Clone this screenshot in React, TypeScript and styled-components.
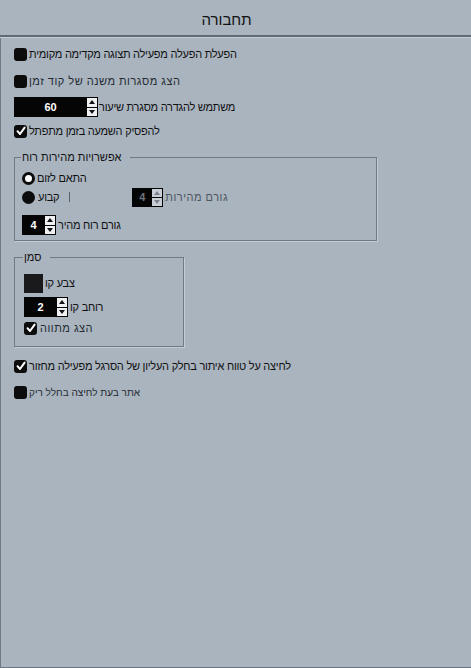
import React from 'react';
import styled, { createGlobalStyle } from 'styled-components';

const GlobalStyle = createGlobalStyle`
  html, body {
    margin: 0;
    padding: 0;
    background: #a9b4bf;
  }
  body {
    font-family: 'Liberation Sans', 'DejaVu Sans', sans-serif;
    color: #111;
  }
`;

const Page = styled.div`
  width: 471px;
  height: 668px;
  display: flex;
  flex-direction: column;
  background: #a9b4bf;
  box-sizing: border-box;
  border-bottom: 1px solid #6b7682;
  overflow: hidden;
`;

const Header = styled.div`
  height: 37px;
  display: flex;
  align-items: center;
  justify-content: center;
  font-size: 15px;
  padding: 4px 18px 0 0;
  box-sizing: border-box;
  border-bottom: 2px solid #5f6a76;
  box-shadow: 0 1px 0 #c3ccd5;
`;

const Panel = styled.div`
  flex: 1;
  display: flex;
  flex-direction: column;
  border-left: 1px solid #6f7a86;
  margin-top: 1px;
  padding: 6px 0 0 13px;
`;

const Row = styled.div<{ $mt?: number }>`
  display: flex;
  align-items: center;
  height: 20px;
  margin-top: ${p => p.$mt ?? 0}px;
  direction: ltr;
`;

type LabelSize = 'normal' | 'spaced' | 'small';

const Label = styled.span<{ $size?: LabelSize; $muted?: boolean; $gap?: number }>`
  direction: rtl;
  margin-left: ${p => p.$gap ?? 2}px;
  font-size: ${p => (p.$size === 'small' ? 10 : 11)}px;
  letter-spacing: ${p => (p.$size === 'spaced' ? '0.5px' : p.$size === 'small' ? '0' : '-0.25px')};
  color: ${p => (p.$muted ? '#4d555e' : p.$size && p.$size !== 'normal' ? '#262b31' : '#111')};
  white-space: nowrap;
`;

const Box = styled.span`
  width: 13px;
  height: 13px;
  border-radius: 3px;
  background: #0c0c0c;
  display: inline-flex;
  align-items: center;
  justify-content: center;
  flex: none;
`;

const Radio = styled.span<{ $on?: boolean }>`
  width: 13px;
  height: 13px;
  border-radius: 50%;
  box-sizing: border-box;
  background: ${p => (p.$on ? '#fff' : '#0c0c0c')};
  border: ${p => (p.$on ? '3px solid #0c0c0c' : 'none')};
  flex: none;
`;

const Spin = styled.span<{ $w: number; $h?: number }>`
  width: ${p => p.$w}px;
  height: ${p => p.$h ?? 20}px;
  display: flex;
  flex: none;
  background: #050505;
  box-sizing: border-box;
`;

const SpinValue = styled.span<{ $disabled?: boolean }>`
  flex: 1;
  display: flex;
  align-items: center;
  justify-content: center;
  font-size: 11px;
  font-weight: bold;
  color: ${p => (p.$disabled ? '#6c737b' : '#fff')};
`;

const Arrows = styled.span`
  width: 10px;
  display: flex;
  flex-direction: column;
  gap: 1px;
  padding: 1px 1px 1px 0;
`;

const ArrowBtn = styled.span<{ $disabled?: boolean }>`
  flex: 1;
  background: ${p => (p.$disabled ? '#c9cfd6' : '#eef0f2')};
  display: flex;
  align-items: center;
  justify-content: center;
`;

const GroupWrap = styled.div<{ $mt: number }>`
  margin-top: ${p => p.$mt}px;
`;

const Group = styled.fieldset<{ $w: number; $h: number; $pl: number }>`
  width: ${p => p.$w}px;
  height: ${p => p.$h}px;
  box-sizing: border-box;
  margin: 0;
  padding: 0 0 0 ${p => p.$pl}px;
  border: 1px solid #6f7a86;
  box-shadow: 1px 1px 0 #c3ccd5;
  direction: ltr;
`;

const Legend = styled.legend`
  padding: 0 8px 0 1px;
  margin-left: -1px;
  font-size: 11px;
  direction: rtl;
  line-height: 14px;
`;

const Divider = styled.span`
  width: 1px;
  height: 10px;
  background: #5a636d;
  margin: 0 62px 0 10px;
`;

const Swatch = styled.span`
  width: 19px;
  height: 19px;
  background: #1a1a1c;
  flex: none;
`;

const Check = () => (
  <svg width="10" height="10" viewBox="0 0 10 10">
    <path d="M1.5 5.2 L4 8 L8.6 1.6" fill="none" stroke="#fff" strokeWidth="2" strokeLinecap="round" strokeLinejoin="round" />
  </svg>
);

const CheckBox = ({ checked }: { checked?: boolean }) => <Box>{checked && <Check />}</Box>;

const Tri = ({ up, color }: { up?: boolean; color: string }) => (
  <svg width="6" height="4" viewBox="0 0 6 4">
    <path d={up ? 'M0 4 L3 0 L6 4 Z' : 'M0 0 L3 4 L6 0 Z'} fill={color} />
  </svg>
);

const SpinBox = ({ value, w, h, disabled }: { value: string; w: number; h?: number; disabled?: boolean }) => {
  const c = disabled ? '#7a828b' : '#111';
  return (
    <Spin $w={w} $h={h}>
      <SpinValue $disabled={disabled}>{value}</SpinValue>
      <Arrows>
        <ArrowBtn $disabled={disabled}><Tri up color={c} /></ArrowBtn>
        <ArrowBtn $disabled={disabled}><Tri color={c} /></ArrowBtn>
      </Arrows>
    </Spin>
  );
};

const App: React.FC = () => {
  return (
    <Page>
      <GlobalStyle />
      <Header>תחבורה</Header>
      <Panel>
        <Row>
          <CheckBox />
          <Label>הפעלת הפעלה מפעילה תצוגה מקדימה מקומית</Label>
        </Row>
        <Row $mt={7}>
          <CheckBox />
          <Label $size="spaced">הצג מסגרות משנה של קוד זמן</Label>
        </Row>
        <Row $mt={6}>
          <SpinBox value="60" w={84} />
          <Label $gap={1}>משתמש להגדרה מסגרת שיעור</Label>
        </Row>
        <Row $mt={4}>
          <CheckBox checked />
          <Label>להפסיק השמעה בזמן מתפתל</Label>
        </Row>

        <GroupWrap $mt={9}>
          <Group $w={363} $h={91} $pl={7}>
            <Legend>אפשרויות מהירות רוח</Legend>
            <Row $mt={4}>
              <Radio $on />
              <Label $gap={2}>התאם לזום</Label>
            </Row>
            <Row $mt={-1}>
              <Radio />
              <Label $gap={3}>קבוע</Label>
              <Divider />
              <SpinBox value="4" w={31} h={19} disabled />
              <Label $size="spaced" $muted $gap={2}>גורם מהירות</Label>
            </Row>
            <Row $mt={8}>
              <SpinBox value="4" w={34} />
              <Label $gap={2}>גורם רוח מהיר</Label>
            </Row>
          </Group>
        </GroupWrap>

        <GroupWrap $mt={9}>
          <Group $w={170} $h={97} $pl={9}>
            <Legend>סמן</Legend>
            <Row $mt={9}>
              <Swatch />
              <Label $gap={2}>צבע קו</Label>
            </Row>
            <Row $mt={4}>
              <SpinBox value="2" w={44} />
              <Label $gap={2}>רוחב קו</Label>
            </Row>
            <Row $mt={1}>
              <CheckBox checked />
              <Label $size="spaced" $gap={3}>הצג מתווה</Label>
            </Row>
          </Group>
        </GroupWrap>

        <Row $mt={9}>
          <CheckBox checked />
          <Label>לחיצה על טווח איתור בחלק העליון של הסרגל מפעילה מחזור</Label>
        </Row>
        <Row $mt={6}>
          <CheckBox />
          <Label $size="small">אתר בעת לחיצה בחלל ריק</Label>
        </Row>
      </Panel>
    </Page>
  );
};

export default App;
